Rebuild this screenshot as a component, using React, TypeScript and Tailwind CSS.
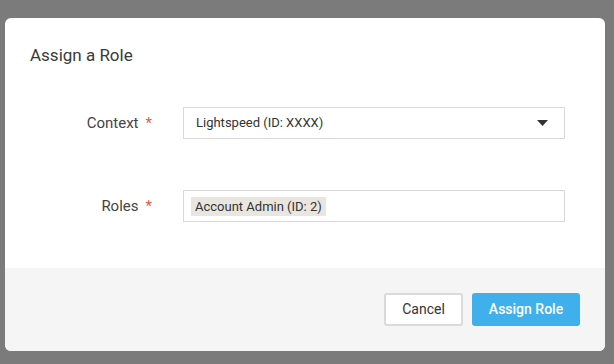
export default function App() {
  return (
    <div
      className="w-[614px] h-[364px] bg-[#7b7b7b] pl-[5px] pt-[18px]"
      style={{ fontFamily: "Roboto, 'Liberation Sans', sans-serif" }}
    >
      <div className="w-[600px] h-[333px] bg-white rounded-[6px] overflow-hidden flex flex-col">
        <div className="pl-[25px] pt-[26px] h-[49px]">
          <h2 className="text-[17px] leading-[22px] text-[#3a3a3a]">Assign a Role</h2>
        </div>
        <div className="pt-[40px] flex flex-col gap-[51px] h-[201px]">
          <div className="flex items-center">
            <div className="w-[147px] flex justify-end items-center gap-[7px] text-[15px] text-[#444444]">
              <span>Context</span>
              <span className="text-[#e8574a] text-[15px]">*</span>
            </div>
            <div className="ml-[31px] w-[382px] h-[32px] border border-[#d9d9d9] flex items-center justify-between pl-[12px] pr-[16px]">
              <span className="text-[13px] text-[#333333]">Lightspeed (ID: XXXX)</span>
              <svg width="11" height="6" viewBox="0 0 11 6">
                <path d="M0 0 H11 L5.5 6 Z" fill="#333333" />
              </svg>
            </div>
          </div>
          <div className="flex items-center">
            <div className="w-[147px] flex justify-end items-center gap-[7px] text-[15px] text-[#444444]">
              <span>Roles</span>
              <span className="text-[#e8574a] text-[15px]">*</span>
            </div>
            <div className="ml-[31px] w-[382px] h-[32px] border border-[#d9d9d9] flex items-center pl-[7px]">
              <span className="bg-[#e9e5df] text-[13px] text-[#333333] px-[4px] h-[19px] leading-[19px]">
                Account Admin (ID: 2)
              </span>
            </div>
          </div>
        </div>
        <div className="flex-1 bg-[#f5f5f5] flex items-center justify-end gap-[9px] pr-[25px]">
          <button className="w-[79px] h-[33px] rounded-[3px] border-2 border-[#dadada] bg-white text-[14px] text-[#333333]">
            Cancel
          </button>
          <button className="w-[108px] h-[33px] rounded-[3px] bg-[#3fb0ec] text-[14px] font-medium text-white">
            Assign Role
          </button>
        </div>
      </div>
    </div>
  );
}
